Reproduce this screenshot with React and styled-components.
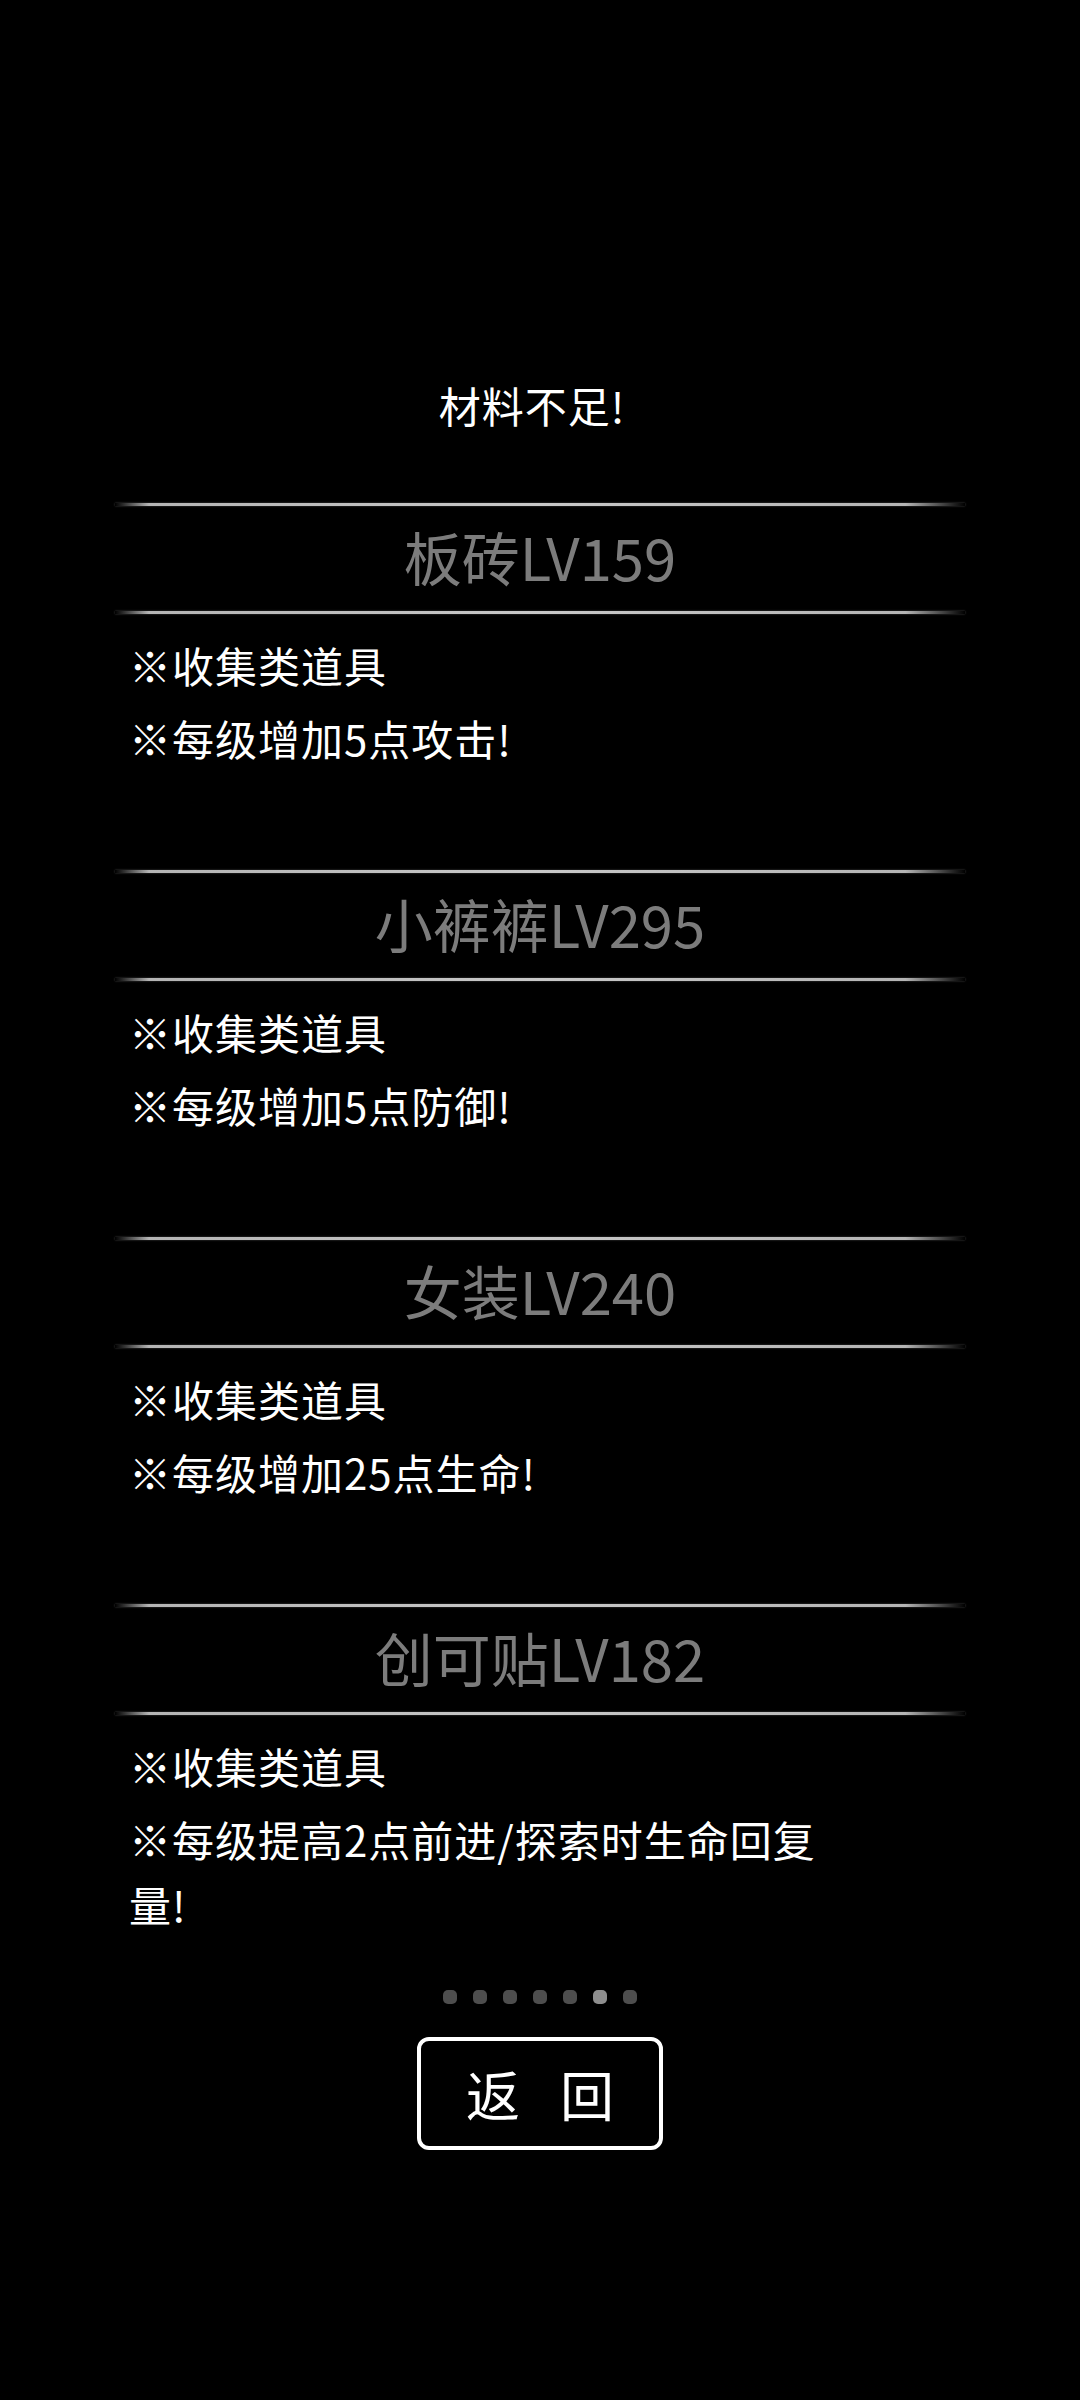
import React from "react";
import styled, { createGlobalStyle } from "styled-components";

const items = [
  { name: "板砖LV159", lines: ["※收集类道具", "※每级增加5点攻击!"] },
  { name: "小裤裤LV295", lines: ["※收集类道具", "※每级增加5点防御!"] },
  { name: "女装LV240", lines: ["※收集类道具", "※每级增加25点生命!"] },
  {
    name: "创可贴LV182",
    lines: ["※收集类道具", "※每级提高2点前进/探索时生命回复量!"],
  },
];

function App() {
  return (
    <Page>
      <GlobalStyle />
      <Message>材料不足!</Message>
      {items.map((item) => (
        <Section key={item.name}>
          <Divider />
          <Title>{item.name}</Title>
          <Divider />
          <Desc>
            {item.lines.map((line) => (
              <DescLine key={line}>{line}</DescLine>
            ))}
          </Desc>
        </Section>
      ))}
      <Dots>
        {[0, 1, 2, 3, 4, 5, 6].map((i) => (
          <Dot key={i} $active={i === 5} />
        ))}
      </Dots>
      <BackButton>返 回</BackButton>
    </Page>
  );
}

const GlobalStyle = createGlobalStyle`
  html, body {
    margin: 0;
    padding: 0;
    background: #000;
  }
  body {
    font-family: "Noto Sans CJK SC", "Noto Sans", sans-serif;
  }
`;

const Page = styled.div`
  width: 1080px;
  min-height: 2400px;
  background: #000;
  display: flex;
  flex-direction: column;
  align-items: center;
  padding-top: 377px;
  box-sizing: border-box;
`;

const Message = styled.div`
  color: #fff;
  font-size: 42px;
  line-height: 56px;
  letter-spacing: 1px;
  margin: 0 16px 70px 0;
`;

const Section = styled.section`
  width: 850px;
  height: 367px;
  display: flex;
  flex-direction: column;
  flex-shrink: 0;
`;

const Divider = styled.div`
  height: 3px;
  width: 100%;
  background: linear-gradient(
    to right,
    rgba(200, 200, 200, 0) 0%,
    rgba(200, 200, 200, 0.9) 4%,
    #c8c8c8 50%,
    rgba(200, 200, 200, 0.9) 93%,
    rgba(200, 200, 200, 0) 100%
  );
  box-shadow: 0 0 2px rgba(160, 160, 160, 0.5);
`;

const Title = styled.div`
  color: #7c7c7c;
  font-size: 58px;
  line-height: 100px;
  margin-bottom: 5px;
  text-align: center;
`;

const Desc = styled.div`
  width: 710px;
  padding: 18px 0 0 14px;
  display: flex;
  flex-direction: column;
  gap: 8px;
`;

const DescLine = styled.p`
  margin: 0;
  color: #fff;
  font-size: 42px;
  line-height: 65px;
  letter-spacing: 1px;
`;

const Dots = styled.div`
  display: flex;
  gap: 16px;
  margin-top: 19px;
`;

const Dot = styled.span`
  width: 14px;
  height: 14px;
  border-radius: 5px;
  background: ${(p) => (p.$active ? "#8e8e8e" : "#4e4e4e")};
`;

const BackButton = styled.button`
  margin-top: 33px;
  width: 246px;
  height: 113px;
  box-sizing: border-box;
  border: 4px solid #fff;
  border-radius: 12px;
  background: #000;
  color: #fff;
  font-family: "Noto Sans CJK SC", sans-serif;
  font-size: 54px;
  letter-spacing: 14px;
  padding: 0 0 0 14px;
  display: flex;
  align-items: center;
  justify-content: center;
`;

export default App;
